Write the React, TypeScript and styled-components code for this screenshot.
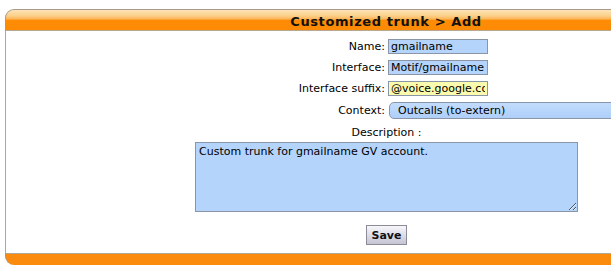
import React from 'react';
import styled, { createGlobalStyle } from 'styled-components';

const GlobalStyle = createGlobalStyle`
  html, body {
    margin: 0;
    padding: 0;
    background: #ffffff;
    overflow: hidden;
  }
  body {
    font-family: 'DejaVu Sans', Verdana, sans-serif;
    font-size: 11px;
    color: #000;
  }
`;

const Panel = styled.div`
  margin: 9px 0 0 5px;
  width: 762px;
`;

const Header = styled.div`
  box-sizing: border-box;
  height: 22px;
  border: 1px solid #a89a88;
  border-bottom: 1px solid #b8a890;
  border-radius: 9px 9px 0 0;
  background: linear-gradient(
    to bottom,
    #fde3b8 0%,
    #fccf88 30%,
    #fbb456 45%,
    #ff8c04 52%,
    #fd8a06 100%
  );
  display: flex;
  align-items: center;
  justify-content: center;
`;

const Title = styled.h1`
  margin: 0;
  font-family: Tahoma, 'DejaVu Sans', Verdana, sans-serif;
  font-size: 13px;
  letter-spacing: 0.6px;
  font-weight: bold;
  color: #111;
  padding-top: 2px;
`;

const Body = styled.div`
  border-left: 1px solid #a8a8a8;
  background: #fff;
  padding: 8px 0 8px;
  display: flex;
  flex-direction: column;
  align-items: center;
`;

const Grid = styled.div`
  width: 100%;
  display: grid;
  grid-template-columns: 1fr 1fr;
  column-gap: 3px;
  row-gap: 6px;
  align-items: center;
`;

const Label = styled.label`
  text-align: right;
  font-size: 11px;
  line-height: 15px;
`;

const Field = styled.input<{ $tone?: 'blue' | 'yellow' }>`
  box-sizing: border-box;
  width: 100px;
  height: 15px;
  margin: 0;
  padding: 0 2px;
  border: 1px solid #8a96a8;
  background: ${p => (p.$tone === 'yellow' ? '#fbfbae' : '#b4d4fb')};
  font-family: 'DejaVu Sans', Verdana, sans-serif;
  font-size: 11px;
  color: #000;
  outline: none;
`;

const Select = styled.div`
  box-sizing: border-box;
  width: 260px;
  height: 17px;
  margin-left: 1px;
  padding: 0 8px;
  border: 1px solid #8a96a8;
  border-radius: 5px;
  background: linear-gradient(#c2dcfc, #aecff9);
  font-size: 11px;
  line-height: 15px;
  display: flex;
  align-items: center;
`;

const DescLabel = styled.div`
  margin-top: 7px;
  font-size: 11px;
  line-height: 13px;
  text-align: center;
`;

const Area = styled.textarea`
  box-sizing: border-box;
  width: 383px;
  height: 70px;
  margin: 3px 0 0;
  padding: 2px 3px;
  border: 1px solid #8a96a8;
  background: #b4d4fb;
  font-family: 'DejaVu Sans', Verdana, sans-serif;
  font-size: 11px;
  color: #000;
  resize: both;
  outline: none;
`;

const SaveButton = styled.button`
  margin-top: 13px;
  width: 41px;
  height: 20px;
  padding: 0;
  border: 1px solid #8c8c98;
  background: linear-gradient(#f6f6fa 0%, #dedee8 50%, #c4c4d4 100%);
  font-family: Tahoma, 'DejaVu Sans', Verdana, sans-serif;
  font-size: 11px;
  font-weight: bold;
  color: #111;
  cursor: pointer;
`;

const Footer = styled.div`
  height: 11px;
  border-top: 1px solid #b0a898;
  border-left: 1px solid #b09070;
  border-radius: 0 0 0 9px;
  background: #fb8b0e;
`;

export default function App() {
  return (
    <>
      <GlobalStyle />
      <Panel>
        <Header>
          <Title>Customized trunk &gt; Add</Title>
        </Header>
        <Body>
          <Grid>
            <Label>Name:</Label>
            <div><Field defaultValue="gmailname" /></div>
            <Label>Interface:</Label>
            <div><Field defaultValue="Motif/gmailname" /></div>
            <Label>Interface suffix:</Label>
            <div><Field $tone="yellow" defaultValue="@voice.google.com" /></div>
            <Label>Context:</Label>
            <div><Select>Outcalls (to-extern)</Select></div>
          </Grid>
          <DescLabel>Description :</DescLabel>
          <Area defaultValue="Custom trunk for gmailname GV account." />
          <SaveButton>Save</SaveButton>
        </Body>
        <Footer />
      </Panel>
    </>
  );
}
